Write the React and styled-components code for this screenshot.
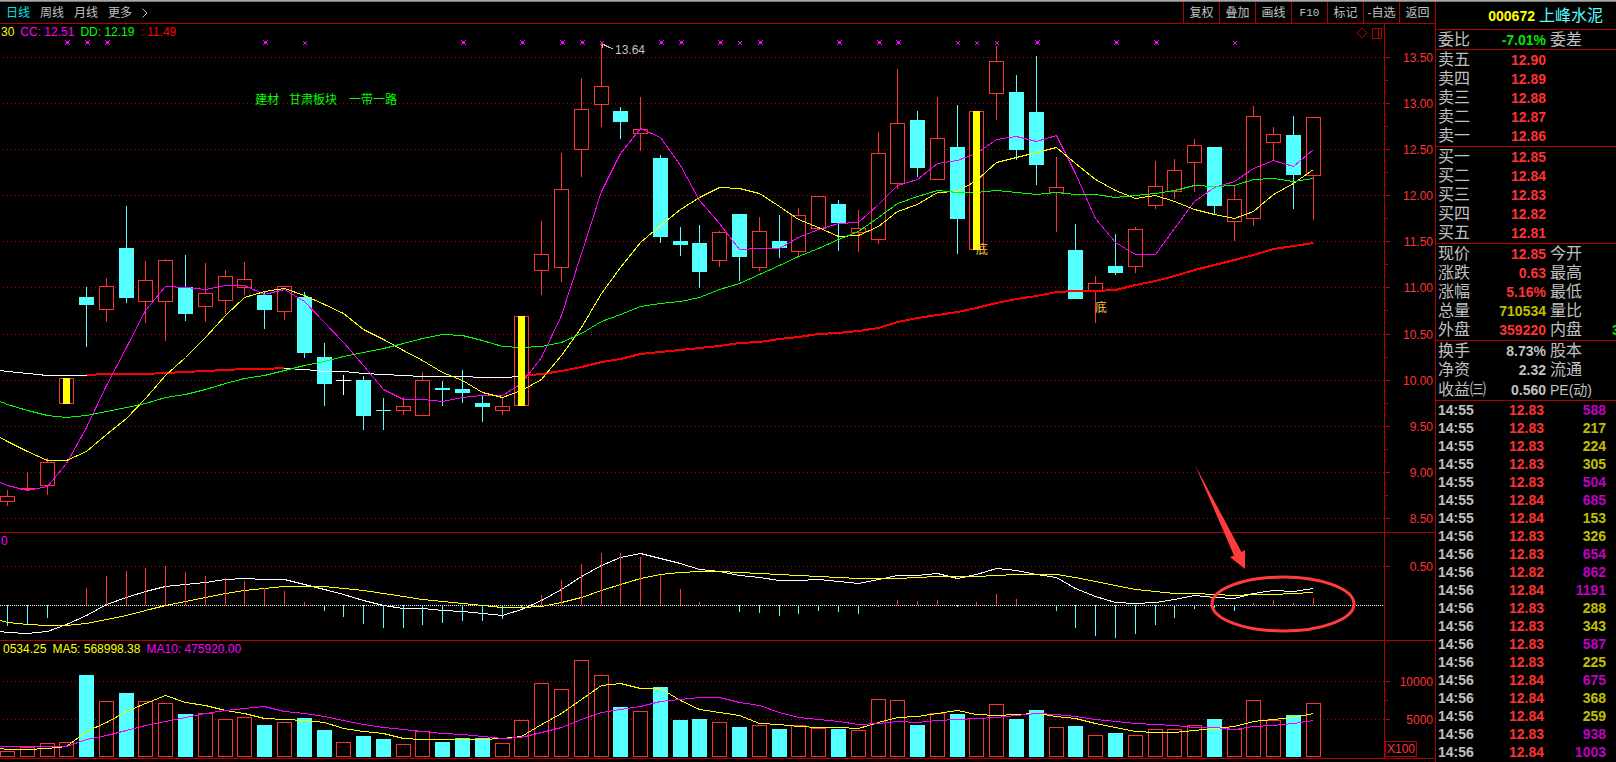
import styled, { createGlobalStyle } from "styled-components";

const GlobalStyle = createGlobalStyle`
  * {
    box-sizing: border-box;
  }

  body {
    margin: 0;
    background: #000;
    font-family: "Liberation Sans", "Noto Sans CJK SC", sans-serif;
    font-size: 12px;
    overflow: hidden;
  }
`

const Page = styled.div`
  display: flex;
  flex-direction: column;
  min-height: 100vh;
  background: #000;
  border-top: 1px solid #a8a8a8;
`

const Columns = styled.div`
  display: flex;
  flex: 1;
  border-top: 1px solid #787878;
`

const ChartColumn = styled.main`
  flex: 1;
  min-width: 0;
  position: relative;
`

const Toolbar = styled.div`
  display: flex;
  justify-content: space-between;
  height: 22px;
  border-bottom: 1px solid #b00000;
`

const Periods = styled.nav`
  display: flex;
  align-items: center;
  gap: 10px;
  padding-left: 6px;
`

const PeriodButton = styled.button`
  border: 0;
  padding: 0;
  background: none;
  font: inherit;
  line-height: 20px;
  color: ${(p) => (p.$active ? "#00e6e6" : "#c0c0c0")};
  cursor: pointer;
`

const Tools = styled.div`
  display: flex;
`

const ToolButton = styled.button`
  width: 36px;
  border: 0;
  border-left: 1px solid #b00000;
  padding: 0;
  background: none;
  font: inherit;
  font-family: ${(p) => (p.$mono ? '"Liberation Mono", monospace' : "inherit")};
  font-size: ${(p) => (p.$mono ? "11px" : "12px")};
  line-height: 20px;
  white-space: nowrap;
  color: #c0c0c0;
  cursor: pointer;
`

const Pane = styled.section`
  display: flex;
  position: relative;
  border-bottom: 1px solid #b00000;
`

const Plot = styled.svg`
  display: block;
  flex: 1;
  min-width: 0;
  height: ${(p) => p.$height}px;
`

const Axis = styled.svg`
  display: block;
  width: 51px;
  height: ${(p) => p.$height}px;
  border-left: 1px solid #b00000;
`

const Legend = styled.div`
  position: absolute;
  top: 0;
  left: 1px;
  display: flex;
  gap: 6px;
  padding-left: ${(p) => p.$indent || 0}px;
  line-height: 16px;
`

const LegendItem = styled.span`
  color: ${(p) => p.$color};
`

const Annotation = styled.svg`
  position: absolute;
  top: 0;
  left: 0;
  width: 100%;
  height: 100%;
  pointer-events: none;
`

const Side = styled.aside`
  width: 181px;
  overflow: hidden;
  border-left: 1px solid #b00000;
`

const StockTitle = styled.h1`
  display: flex;
  align-items: center;
  justify-content: flex-end;
  gap: 4px;
  height: 28px;
  margin: 0;
  padding-right: 13px;
  border-bottom: 1px solid #b00000;
  font-size: 14px;
`

const Code = styled.span`
  color: #ffff00;
`

const Name = styled.span`
  font-size: 16px;
  font-weight: normal;
  line-height: 24px;
  color: #54ffff;
`

const QuoteTable = styled.table`
  width: 100%;
  table-layout: fixed;
  border-spacing: 0;
`

const QuoteGroup = styled.tbody`
  tr:last-child > * {
    height: ${(p) => p.$last || 21}px;
    border-bottom: 1px solid #b00000;
  }
`

const Label = styled.th`
  height: 19px;
  padding: 0 0 0 ${(p) => p.$indent || 2}px;
  text-align: left;
  white-space: nowrap;
  font-size: ${(p) => (p.$latin ? "14px" : "16px")};
  font-weight: normal;
  line-height: 18px;
  color: #c0c0c0;
`

const Value = styled.td`
  padding: 0;
  text-align: right;
  font-size: 14px;
  font-weight: bold;
  line-height: 18px;
  color: ${(p) => p.$color};
`

const TickTable = styled.table`
  width: 100%;
  table-layout: fixed;
  border-spacing: 0;
`

const Tick = styled.td`
  height: 18px;
  padding: 0 ${(p) => p.$right || 0}px 0 ${(p) => p.$left || 0}px;
  text-align: ${(p) => p.$align || "right"};
  font-size: 14px;
  font-weight: bold;
  line-height: 18px;
  color: ${(p) => p.$color};
`

const RED = "#ff3232"
const CYAN = "#54ffff"
const FRAME = "#b00000"
const GREY = "#c0c0c0"

const barX = (i) => Math.floor(7.45 + 19.786 * i)

// kind, high, body top, body bottom, low
const candles = [
  ["up", 490, 496, 502, 506], ["up", 472, 488, 490, 490], ["up", 458, 462, 486, 495], ["mark", 378, 378, 404, 404],
  ["down", 287, 297, 305, 347], ["up", 278, 286, 310, 322], ["down", 206, 248, 298, 303], ["up", 261, 280, 302, 323],
  ["up", 259, 260, 302, 341], ["down", 255, 287, 314, 321], ["up", 263, 293, 307, 322], ["up", 270, 276, 301, 314],
  ["up", 262, 279, 288, 295], ["down", 291, 295, 310, 329], ["up", 286, 286, 312, 320], ["down", 292, 297, 353, 358],
  ["down", 343, 357, 384, 406], ["flat", 375, 380, 381, 395], ["down", 376, 380, 416, 430], ["down", 398, 410, 411, 430],
  ["up", 397, 406, 411, 415], ["up", 372, 380, 416, 416], ["down", 381, 388, 390, 406], ["down", 370, 389, 393, 403],
  ["down", 396, 403, 407, 422], ["up", 398, 406, 411, 415], ["mark", 316, 316, 406, 406], ["up", 221, 254, 271, 295],
  ["up", 153, 189, 268, 282], ["up", 78, 109, 150, 177], ["up", 44, 86, 105, 127], ["down", 107, 111, 122, 139],
  ["up", 97, 129, 134, 151], ["down", 155, 158, 237, 243], ["down", 227, 241, 245, 256], ["down", 225, 243, 272, 288],
  ["up", 231, 232, 261, 267], ["down", 214, 214, 257, 281], ["up", 217, 231, 268, 271], ["down", 215, 241, 248, 258],
  ["up", 208, 215, 252, 256], ["up", 196, 196, 229, 229], ["down", 200, 204, 223, 251], ["up", 210, 228, 233, 252],
  ["up", 132, 153, 240, 244], ["up", 69, 123, 184, 189], ["down", 111, 120, 168, 177], ["up", 97, 138, 180, 180],
  ["down", 105, 147, 219, 254], ["mark", 111, 111, 250, 250], ["up", 46, 61, 94, 120], ["down", 75, 92, 150, 160],
  ["down", 56, 112, 165, 185], ["up", 157, 187, 193, 232], ["down", 224, 250, 299, 299], ["up", 276, 283, 292, 323],
  ["down", 234, 266, 273, 275], ["up", 227, 229, 267, 273], ["up", 161, 186, 206, 209], ["up", 159, 170, 192, 199],
  ["up", 139, 145, 163, 192], ["down", 147, 147, 206, 214], ["up", 186, 199, 222, 241], ["up", 106, 116, 219, 226],
  ["up", 127, 134, 143, 161], ["down", 116, 135, 175, 209], ["up", 117, 117, 176, 220],
]

const maShort = [485, 490, 486, 463, 427, 385, 347, 310, 286, 287, 289, 285, 285, 294, 289, 301, 322, 342, 365, 389, 399, 399, 401, 397, 395, 395, 383, 357, 315, 253, 191, 153, 128, 137, 165, 200, 223, 249, 248, 248, 237, 229, 223, 222, 204, 185, 179, 163, 160, 153, 139, 136, 141, 135, 173, 218, 242, 254, 254, 228, 201, 187, 181, 168, 160, 166, 149]
const maMid = [441, 451, 460, 460, 451, 434, 418, 398, 375, 357, 337, 315, 297, 291, 288, 295, 304, 313, 329, 339, 350, 360, 372, 380, 392, 397, 390, 379, 355, 327, 293, 267, 242, 225, 209, 197, 187, 188, 193, 206, 219, 227, 236, 235, 226, 211, 204, 192, 191, 180, 162, 157, 152, 147, 163, 179, 190, 198, 195, 201, 209, 214, 218, 211, 194, 183, 169]
const maLong = [404, 410, 415, 417, 415, 411, 407, 403, 397, 394, 389, 383, 378, 375, 370, 365, 361, 356, 352, 348, 343, 338, 334, 335, 340, 346, 347, 346, 342, 333, 321, 314, 306, 303, 301, 297, 289, 283, 274, 265, 256, 248, 239, 231, 217, 203, 196, 190, 192, 192, 190, 192, 194, 192, 194, 194, 197, 195, 193, 190, 185, 186, 185, 179, 178, 181, 178]
const trend = [371, 373, 375, 375, 375, 374, 374, 374, 373, 372, 371, 370, 369, 369, 368, 369, 371, 371, 373, 374, 375, 376, 376, 376, 377, 377, 376, 374, 371, 367, 362, 359, 354, 352, 350, 348, 346, 343, 342, 339, 337, 334, 333, 331, 328, 322, 318, 315, 312, 308, 303, 299, 296, 292, 291, 291, 290, 285, 281, 276, 270, 265, 260, 255, 249, 246, 243]

const crosses = [3, 4, 5, 13, 15, 23, 26, 28, 29, 30, 33, 34, 36, 37, 38, 42, 44, 45, 48, 49, 50, 52, 56, 58, 62]
const smallCrosses = [15, 30, 37, 48, 49, 50, 62]

const macd = [626, 624, 618, 604, 588, 576, 571, 568, 566, 572, 576, 578, 581, 588, 591, 602, 611, 617, 624, 628, 628, 625, 623, 621, 621, 619, 607, 595, 580, 564, 553, 553, 557, 575, 589, 602, 605, 612, 613, 616, 614, 611, 612, 614, 607, 600, 601, 600, 607, 602, 594, 599, 604, 611, 628, 636, 638, 634, 625, 618, 609, 608, 611, 603, 600, 603, 598]
const dif = [632, 633, 631, 624, 615, 604, 597, 591, 586, 584, 582, 579, 578, 579, 579, 584, 589, 594, 600, 605, 608, 608, 610, 611, 613, 615, 609, 600, 589, 576, 565, 557, 553, 558, 563, 569, 571, 575, 577, 580, 580, 579, 581, 583, 579, 575, 575, 573, 578, 574, 568, 570, 574, 577, 588, 596, 602, 603, 602, 599, 595, 597, 598, 593, 590, 591, 588]
const dea = [622, 624, 625, 625, 623, 619, 615, 610, 605, 601, 597, 593, 590, 588, 586, 586, 586, 588, 590, 593, 596, 599, 601, 603, 605, 607, 607, 606, 602, 597, 590, 584, 578, 574, 572, 571, 571, 572, 573, 574, 575, 576, 577, 578, 578, 578, 577, 576, 576, 576, 575, 574, 574, 574, 577, 581, 585, 589, 591, 593, 593, 594, 595, 594, 594, 593, 592]

const volumes = [751, 747, 743, 742, 675, 701, 693, 701, 703, 714, 713, 719, 717, 725, 722, 718, 730, 742, 736, 739, 744, 731, 742, 738, 738, 743, 720, 683, 689, 660, 675, 707, 711, 687, 720, 719, 722, 727, 725, 729, 725, 728, 729, 730, 699, 700, 725, 713, 714, 718, 704, 719, 710, 727, 726, 735, 733, 735, 729, 729, 725, 719, 729, 700, 720, 715, 703]
const volMa5 = [749, 749, 748, 746, 731, 722, 711, 703, 695, 702, 705, 710, 713, 718, 719, 720, 722, 728, 731, 733, 738, 739, 739, 739, 739, 738, 736, 724, 713, 699, 685, 683, 688, 688, 700, 709, 712, 715, 723, 724, 726, 727, 727, 728, 722, 717, 716, 713, 710, 714, 715, 714, 713, 716, 718, 723, 727, 731, 732, 732, 730, 728, 726, 721, 719, 717, 713]
const volMa10 = [746, 746, 746, 746, 739, 735, 730, 725, 721, 717, 713, 710, 708, 706, 711, 713, 716, 720, 724, 727, 729, 731, 733, 734, 736, 738, 737, 732, 727, 719, 712, 709, 706, 701, 699, 697, 697, 702, 705, 712, 717, 719, 721, 724, 723, 721, 722, 720, 719, 718, 717, 715, 713, 714, 716, 719, 721, 723, 724, 725, 727, 727, 729, 726, 725, 723, 720]

const priceScale = [
  { y: 57, text: "13.50" }, { y: 103, text: "13.00" }, { y: 149, text: "12.50" }, { y: 195, text: "12.00" },
  { y: 241, text: "11.50" }, { y: 287, text: "11.00" }, { y: 334, text: "10.50" }, { y: 380, text: "10.00" },
  { y: 426, text: "9.50" }, { y: 472, text: "9.00" }, { y: 518, text: "8.50" },
]
const macdScale = [{ y: 566, text: "0.50" }]
const volumeScale = [{ y: 681, text: "10000" }, { y: 719, text: "5000" }]

const sells = [["卖五", "12.90"], ["卖四", "12.89"], ["卖三", "12.88"], ["卖二", "12.87"], ["卖一", "12.86"]]
const buys = [["买一", "12.85"], ["买二", "12.84"], ["买三", "12.83"], ["买四", "12.82"], ["买五", "12.81"]]
const quotes = [
  ["现价", "12.85", RED, "今开"],
  ["涨跌", "0.63", RED, "最高"],
  ["涨幅", "5.16%", RED, "最低"],
  ["总量", "710534", "#c0c000", "量比"],
  ["外盘", "359220", RED, "内盘", "3"],
]
const basics = [
  ["换手", "8.73%", GREY, "股本"],
  ["净资", "2.32", GREY, "流通"],
  ["收益㈢", "0.560", GREY, "PE(动)"],
]

const BUY = "#c0c000"
const SELL = "#c000c0"
const ticks = [
  ["14:55", "12.83", 588, SELL], ["14:55", "12.83", 217, BUY], ["14:55", "12.83", 224, BUY], ["14:55", "12.83", 305, BUY],
  ["14:55", "12.83", 504, SELL], ["14:55", "12.84", 685, SELL], ["14:55", "12.84", 153, BUY], ["14:56", "12.83", 326, BUY],
  ["14:56", "12.83", 654, SELL], ["14:56", "12.82", 862, SELL], ["14:56", "12.84", 1191, SELL], ["14:56", "12.83", 288, BUY],
  ["14:56", "12.83", 343, BUY], ["14:56", "12.83", 587, SELL], ["14:56", "12.83", 225, BUY], ["14:56", "12.84", 675, SELL],
  ["14:56", "12.84", 368, BUY], ["14:56", "12.84", 259, BUY], ["14:56", "12.83", 938, SELL], ["14:56", "12.84", 1003, SELL],
]

function Series({ data, color, from = 0, to = data.length - 1, lead, width = 1 }) {
  const half = width % 2 ? 0.5 : 0
  const points = data.slice(from, to + 1).map((y, i) => `${barX(from + i) + 0.5},${y + half}`)
  if (lead) points.unshift(`0,${lead + half}`)
  return <polyline points={points.join(" ")} fill="none" stroke={color} strokeWidth={width} />
}

function Grid({ scale }) {
  return scale.map((s) => (
    <line key={s.y} x1="3" x2="100%" y1={s.y + 0.5} y2={s.y + 0.5} stroke={FRAME} strokeDasharray="1 3" />
  ))
}

function Candle({ x, kind, high, top, bottom, low }) {
  if (kind === "down" || kind === "flat") {
    const color = kind === "down" ? CYAN : "#fff"
    return (
      <g fill={color}>
        <rect x={x} y={high} width="1" height={low - high} />
        <rect x={x - 7} y={top} width="15" height={bottom - top} />
      </g>
    )
  }
  return (
    <g fill={RED}>
      <rect x={x} y={high} width="1" height={top - high} />
      <rect x={x} y={bottom} width="1" height={low - bottom} />
      <rect x={x - 6.5} y={top + 0.5} width="14" height={bottom - top - 1} fill="#000" stroke={RED} />
      {kind === "mark" && <rect x={x - 3} y={top} width="7" height={bottom - top} fill="#ffff00" />}
    </g>
  )
}

function Cross({ x, small }) {
  const size = small ? 4 : 5
  const top = small ? 41 : 40
  return (
    <g stroke="#ff00ff" fill="#ff00ff">
      <path d={`M${x - 1} ${top}l${size} ${size}m0-${size}l-${size} ${size}`} />
      <rect x={x} y={top + 1} width={size - 2} height={size - 2} stroke="none" />
    </g>
  )
}

function Scale({ scale, top, minors = [] }) {
  return (
    <g transform={`translate(0 ${-top})`}>
      {scale.map((s) => (
        <g key={s.y}>
          <rect y={s.y} width="5" height="1" fill={FRAME} shapeRendering="crispEdges" />
          <text x="48" y={s.y + 5} textAnchor="end" fontSize="12" fill={RED}>{s.text}</text>
        </g>
      ))}
      {minors.map(([y, w]) => (
        <rect key={y} y={y} width={w} height="1" fill={FRAME} shapeRendering="crispEdges" />
      ))}
    </g>
  )
}

function PricePane() {
  const minors = priceScale.flatMap((s, i) =>
    i < priceScale.length - 1 ? [[s.y + 11, 1], [s.y + 23, 3], [s.y + 35, 1]] : []
  )
  return (
    <Pane>
      <Plot $height={508}>
        <g transform="translate(0 -24)">
          <g shapeRendering="crispEdges">
            <Grid scale={priceScale} />
            {candles.map(([kind, high, top, bottom, low], i) => (
              <Candle key={i} x={barX(i)} kind={kind} high={high} top={top} bottom={bottom} low={low} />
            ))}
            <Series data={trend} color="#fff" lead={370} to={4} />
            <Series data={trend} color="#ff0000" from={4} to={14} width={2} />
            <Series data={trend} color="#fff" from={14} to={26} />
            <Series data={trend} color="#ff0000" from={26} width={2} />
            <Series data={maShort} color="#ff00ff" lead={482} />
            <Series data={maMid} color="#ffff00" lead={437} />
            <Series data={maLong} color="#00ff00" lead={401} />
            <rect x={barX(26) - 3} y="316" width="7" height="90" fill="#ffff00" />
            <rect x={barX(49) - 3} y="111" width="7" height="139" fill="#ffff00" />
            {crosses.map((i) => (
              <Cross key={i} x={barX(i)} small={smallCrosses.includes(i)} />
            ))}
            <path d="M602 44l11 5M602 44h3M602 44v4" fill="none" stroke={GREY} />
          </g>
          <text x="615" y="54" fill={GREY}>13.64</text>
          <g fill="#00ff00">
            <text x="255" y="104">建材</text>
            <text x="289" y="104">甘肃板块</text>
            <text x="349" y="104">一带一路</text>
          </g>
          <g fill="#ffc840">
            <text x="976" y="254">底</text>
            <text x="1095" y="312">底</text>
          </g>
        </g>
        <svg x="100%" overflow="visible">
          <g fill="none" stroke={FRAME} shapeRendering="crispEdges">
            <path d="M-22 4l5 5l-5 5l-5 -5z" />
            <path d="M-11.500 4.500h9v10h-9zM-5.500 4.500v10" />
          </g>
        </svg>
      </Plot>
      <Axis $height={508}>
        <Scale scale={priceScale} top={24} minors={minors} />
      </Axis>
      <Legend>
        <LegendItem $color="#ffff00">30</LegendItem>
        <LegendItem $color="#ff00ff">CC: 12.51</LegendItem>
        <LegendItem $color="#00ff00">DD: 12.19</LegendItem>
        <LegendItem $color="#ff0000">: 11.49</LegendItem>
      </Legend>
    </Pane>
  )
}

function MacdPane() {
  return (
    <Pane>
      <Plot $height={107}>
        <g transform="translate(0 -533)" shapeRendering="crispEdges">
          <Grid scale={macdScale} />
          <line x1="0" x2="100%" y1="605.5" y2="605.5" stroke="#fff" strokeDasharray="1 1" />
          <Series data={dif} color="#fff" lead={631} />
          <Series data={dea} color="#ffff00" lead={620} />
          {macd.map((y, i) => (
            <rect key={i} x={barX(i)} y={Math.min(y, 605)} width="1" height={Math.abs(y - 605)} fill={y < 605 ? RED : CYAN} />
          ))}
        </g>
      </Plot>
      <Axis $height={107}>
        <Scale scale={macdScale} top={533} />
      </Axis>
      <Legend>
        <LegendItem $color="#ff00ff">0</LegendItem>
      </Legend>
    </Pane>
  )
}

function VolumePane() {
  return (
    <Pane>
      <Plot $height={117}>
        <g transform="translate(0 -641)" shapeRendering="crispEdges">
          <Grid scale={volumeScale} />
          {volumes.map((y, i) =>
            candles[i][0] === "down" ? (
              <rect key={i} x={barX(i) - 7} y={y} width="15" height={757 - y} fill={CYAN} />
            ) : (
              <rect key={i} x={barX(i) - 6.5} y={y + 0.5} width="14" height={756 - y} fill="#000" stroke={RED} />
            )
          )}
          <Series data={volMa5} color="#ffff00" lead={748} />
          <Series data={volMa10} color="#ff00ff" lead={746} />
        </g>
      </Plot>
      <Axis $height={117}>
        <Scale scale={volumeScale} top={641} minors={[[689, 1], [700, 3], [711, 1]]} />
        <rect x="0.500" y="100.500" width="31" height="15" fill="none" stroke={FRAME} />
        <text x="2" y="112" fill={RED}>X100</text>
      </Axis>
      <Legend $indent={2}>
        <LegendItem $color="#ffff00">0534.25</LegendItem>
        <LegendItem $color="#ffff00">MA5: 568998.38</LegendItem>
        <LegendItem $color="#ff00ff">MA10: 475920.00</LegendItem>
      </Legend>
    </Pane>
  )
}

function QuoteRow({ label, value, color = RED, label2, value2 }) {
  return (
    <tr>
      <Label scope="row">{label}</Label>
      <Value $color={color}>{value}</Value>
      {label2 ? <Label scope="row" $indent={4} $latin={label2.startsWith("PE")}>{label2}</Label> : <td />}
      <Value $color="#00e600">{value2}</Value>
    </tr>
  )
}

function App() {
  return (
    <>
      <GlobalStyle />
      <Page>
        <Columns>
          <ChartColumn>
            <Toolbar>
              <Periods>
                <PeriodButton $active>日线</PeriodButton>
                <PeriodButton>周线</PeriodButton>
                <PeriodButton>月线</PeriodButton>
                <PeriodButton>更多</PeriodButton>
                <svg width="6" height="10" viewBox="0 0 6 10" fill="none" stroke={GREY}>
                  <path d="M0.500 0.500L5 5L0.500 9.500" />
                </svg>
              </Periods>
              <Tools>
                <ToolButton>复权</ToolButton>
                <ToolButton>叠加</ToolButton>
                <ToolButton>画线</ToolButton>
                <ToolButton $mono>F10</ToolButton>
                <ToolButton>标记</ToolButton>
                <ToolButton>-自选</ToolButton>
                <ToolButton>返回</ToolButton>
              </Tools>
            </Toolbar>
            <PricePane />
            <MacdPane />
            <VolumePane />
            <Annotation>
              <g transform="translate(0 -2)">
                <path d="M1195 465L1241.500 552L1245 550L1245 569L1230 557L1234 555.500Z" fill="#ff3b3b" />
                <ellipse cx="1283" cy="604" rx="71" ry="27" fill="none" stroke="#ff3b3b" strokeWidth="3" />
              </g>
            </Annotation>
          </ChartColumn>
          <Side>
            <StockTitle>
              <Code>000672</Code>
              <Name>上峰水泥</Name>
            </StockTitle>
            <QuoteTable>
              <colgroup>
                <col style={{ width: 52 }} />
                <col style={{ width: 58 }} />
                <col style={{ width: 66 }} />
                <col />
              </colgroup>
              <QuoteGroup $last={20}>
                <QuoteRow label="委比" value="-7.01%" color="#00e600" label2="委差" />
              </QuoteGroup>
              <QuoteGroup>
                {sells.map(([label, value]) => <QuoteRow key={label} label={label} value={value} />)}
              </QuoteGroup>
              <QuoteGroup>
                {buys.map(([label, value]) => <QuoteRow key={label} label={label} value={value} />)}
              </QuoteGroup>
              <QuoteGroup>
                {quotes.map(([label, value, color, label2, value2]) => (
                  <QuoteRow key={label} label={label} value={value} color={color} label2={label2} value2={value2} />
                ))}
              </QuoteGroup>
              <QuoteGroup $last={22}>
                {basics.map(([label, value, color, label2]) => (
                  <QuoteRow key={label} label={label} value={value} color={color} label2={label2} />
                ))}
              </QuoteGroup>
            </QuoteTable>
            <TickTable>
              <tbody>
                {ticks.map(([time, price, volume, color], i) => (
                  <tr key={i}>
                    <Tick $align="left" $left={2} $color={GREY}>{time}</Tick>
                    <Tick $right={12} $color={RED}>{price}</Tick>
                    <Tick $right={10} $color={color}>{volume}</Tick>
                  </tr>
                ))}
              </tbody>
            </TickTable>
          </Side>
        </Columns>
      </Page>
    </>
  )
}

export default App;
